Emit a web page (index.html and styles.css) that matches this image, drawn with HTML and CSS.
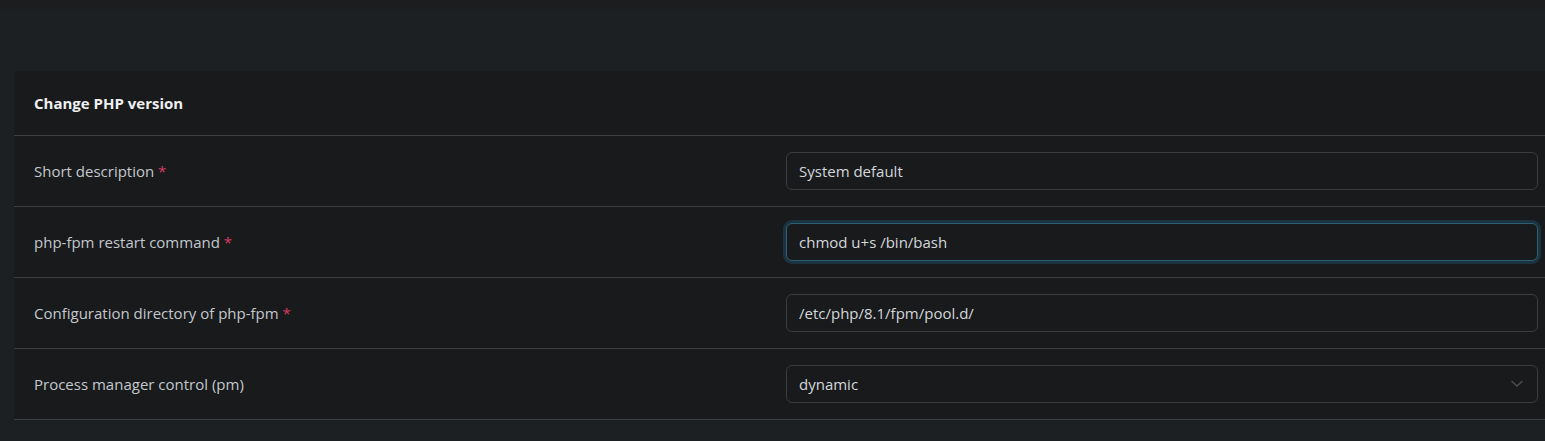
FILE: index.html
```html
<!DOCTYPE html>
<html lang="en">
<head>
<meta charset="utf-8">
<title>Change PHP version</title>
<link rel="stylesheet" href="styles.css">
</head>
<body>
<div class="topbar"></div>
<main class="page">
  <section class="card">
    <div class="card-header">Change PHP version</div>
    <div class="row">
      <label class="label">Short description <span class="req">*</span></label>
      <div class="field"><input class="input" type="text" value="System default"></div>
    </div>
    <div class="row">
      <label class="label">php-fpm restart command <span class="req">*</span></label>
      <div class="field"><input class="input focused" type="text" value="chmod u+s /bin/bash"></div>
    </div>
    <div class="row">
      <label class="label">Configuration directory of php-fpm <span class="req">*</span></label>
      <div class="field"><input class="input" type="text" value="/etc/php/8.1/fpm/pool.d/"></div>
    </div>
    <div class="row">
      <label class="label">Process manager control (pm)</label>
      <div class="field">
        <div class="select">
          <span>dynamic</span>
          <svg class="chev" width="12" height="8" viewBox="0 0 12 8"><path d="M1 1.5 L6 6 L11 1.5" fill="none" stroke="#4a4d52" stroke-width="1.6" stroke-linecap="round" stroke-linejoin="round"/></svg>
        </div>
      </div>
    </div>
  </section>
</main>
</body>
</html>
```
FILE: styles.css
```css
html, body {
  margin: 0;
  padding: 0;
  background: #1d2022;
  overflow: hidden;
  font-family: "Open Sans", "Noto Sans", sans-serif;
  font-size: 15px;
  color: #c3c8cd;
}
.topbar {
  height: 11px;
  background: #1b1d1f;
}
.page {
  padding: 60px 0 0 14px;
}
.card {
  width: 1544px;
  background: #191a1c;
  box-sizing: border-box;
}
.card-header {
  height: 64px;
  padding: 0 20px;
  display: flex;
  align-items: center;
  font-weight: 700;
  color: #eef0f2;
  border-bottom: 1px solid #3b3d40;
}
.row {
  display: grid;
  grid-template-columns: 1fr 1fr;
  padding: 16px 20px;
  border-bottom: 1px solid #3b3d40;
  align-items: center;
}
.label {
  color: #c3c8cd;
}
.req {
  color: #d63a62;
}
.input, .select {
  box-sizing: border-box;
  width: 100%;
  height: 38px;
  padding: 0 12px;
  background: #191a1c;
  border: 1px solid #3a3c3f;
  border-radius: 6px;
  color: #d3d7db;
  font-family: inherit;
  font-size: 15px;
  outline: none;
}
.input.focused {
  border-color: #2f5f73;
  box-shadow: 0 0 0 3px #1b3240;
}
.select {
  display: flex;
  align-items: center;
  justify-content: space-between;
}
.chev {
  margin-right: 2px;
}
```
